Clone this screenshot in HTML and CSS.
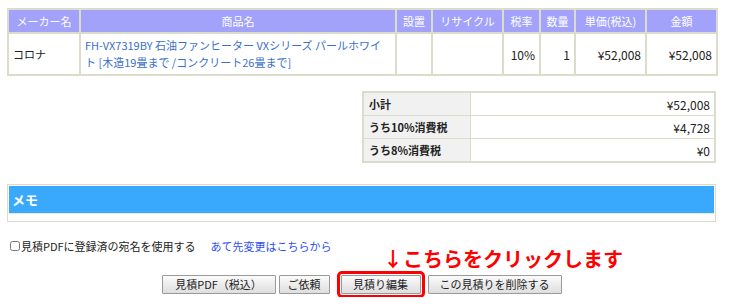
FILE: index.html
```html
<!DOCTYPE html>
<html lang="ja">
<head>
  <meta charset="UTF-8" />
  <title>見積り詳細</title>
  <link rel="stylesheet" href="styles.css">
</head>
<body>
  <div class="wrap">

    <table class="items">
      <colgroup>
        <col style="width:72px"><col style="width:316px"><col style="width:36px"><col style="width:71px">
        <col style="width:37px"><col style="width:35px"><col style="width:71px"><col style="width:71px">
      </colgroup>
      <thead>
        <tr>
          <th>メーカー名</th>
          <th>商品名</th>
          <th>設置</th>
          <th>リサイクル</th>
          <th>税率</th>
          <th>数量</th>
          <th>単価(税込)</th>
          <th>金額</th>
        </tr>
      </thead>
      <tbody>
        <tr>
          <td>コロナ</td>
          <td class="name"><a href="#" class="item-link">FH-VX7319BY 石油ファンヒーター VXシリーズ パールホワイト [木造19畳まで /コンクリート26畳まで]</a></td>
          <td></td>
          <td></td>
          <td class="num">10%</td>
          <td class="num">1</td>
          <td class="num">¥52,008</td>
          <td class="num">¥52,008</td>
        </tr>
      </tbody>
    </table>

    <table class="totals">
      <tr><th>小計</th><td>¥52,008</td></tr>
      <tr><th>うち10%消費税</th><td>¥4,728</td></tr>
      <tr><th>うち8%消費税</th><td>¥0</td></tr>
    </table>

    <div class="memo">
      <div class="memo-head">メモ</div>
      <div class="memo-body"></div>
    </div>

    <div class="bottom">
      <div class="check-row">
        <label><input type="checkbox"> 見積PDFに登録済の宛名を使用する</label>
        <a href="#" class="addr-link">あて先変更はこちらから</a>
      </div>

      <div class="callout">↓こちらをクリックします</div>

      <div class="buttons">
        <button class="btn btn-pdf">見積PDF（税込）</button>
        <button class="btn btn-order">ご依頼</button>
        <button class="btn btn-edit">見積り編集</button>
        <button class="btn btn-delete">この見積りを削除する</button>
      </div>
    </div>

  </div>
</body>
</html>
```

FILE: styles.css
```css
body {
  margin: 0;
  padding: 8px 0 0 7px;
  font-family: "Noto Sans CJK JP", "Noto Sans", sans-serif;
  font-size: 11px;
  color: #222;
  background: #fff;
}

.wrap {
  width: 709px;
}

table {
  border-collapse: collapse;
}

.items {
  width: 709px;
  table-layout: fixed;
  border: 2px solid #dcdccc;
}

.items th {
  background: #a2a2fb;
  color: #fff;
  font-weight: normal;
  height: 22px;
  padding: 0;
  border: 2px solid #dcdccc;
  line-height: 16px;
}

.items td {
  border: 2px solid #dcdccc;
  padding: 3px 4px;
  height: 34px;
  line-height: 17px;
  vertical-align: middle;
}

.items td.name {
  padding-right: 13px;
  word-break: break-all;
}

.items td.num {
  text-align: right;
  font-size: 12px;
}

.item-link {
  color: #3b6fc9;
  text-decoration: none;
}

.totals {
  margin: 15px 0 0 355px;
  width: 354px;
  border: 2px solid #dcdccc;
}

.totals th {
  width: 96px;
  background: #f1f1f1;
  text-align: left;
  padding: 0 5px;
  height: 22px;
  border: 1px solid #dcdccc;
  font-weight: bold;
}

.totals td {
  text-align: right;
  padding: 0 4px;
  border: 1px solid #dcdccc;
  font-size: 12px;
}

.memo {
  margin-top: 21px;
  border: 1px solid #dcdccc;
  padding: 1px;
}

.memo-head {
  background: #38a9fd;
  color: #fff;
  font-weight: bold;
  font-size: 13px;
  height: 27px;
  line-height: 27px;
  padding-left: 3px;
}

.memo-body {
  height: 6px;
  border-top: 1px solid #e8e8dc;
}

.bottom {
  position: relative;
  margin-top: 15px;
}

.check-row {
  display: flex;
  align-items: center;
  gap: 15px;
  height: 18px;
}

.check-row label {
  display: flex;
  align-items: center;
}

.check-row input {
  margin: 0 1px 0 3px;
  width: 10px;
  height: 10px;
}

.addr-link {
  color: #2f4df5;
  text-decoration: none;
}

.callout {
  position: absolute;
  left: 376px;
  top: 10px;
  color: #ff0000;
  font-size: 20px;
  font-weight: bold;
  line-height: 24px;
}

.buttons {
  display: flex;
  justify-content: center;
  margin-top: 16px;
  height: 26px;
  align-items: center;
}

.btn {
  font-family: inherit;
  font-size: 11px;
  color: #222;
  height: 19px;
  padding: 0;
  border: 1px solid #9a9a9a;
  border-radius: 1px;
  background: linear-gradient(#fbfbfb, #dedede);
  line-height: 17px;
}

.btn-pdf { width: 114px; }
.btn-order { width: 51px; margin-left: 3px; }
.btn-edit {
  width: 80px;
  margin: 0 7px 0 11px;
  outline: 3px solid #ff0000;
  outline-offset: 1px;
}
.btn-delete { width: 134px; }
```
